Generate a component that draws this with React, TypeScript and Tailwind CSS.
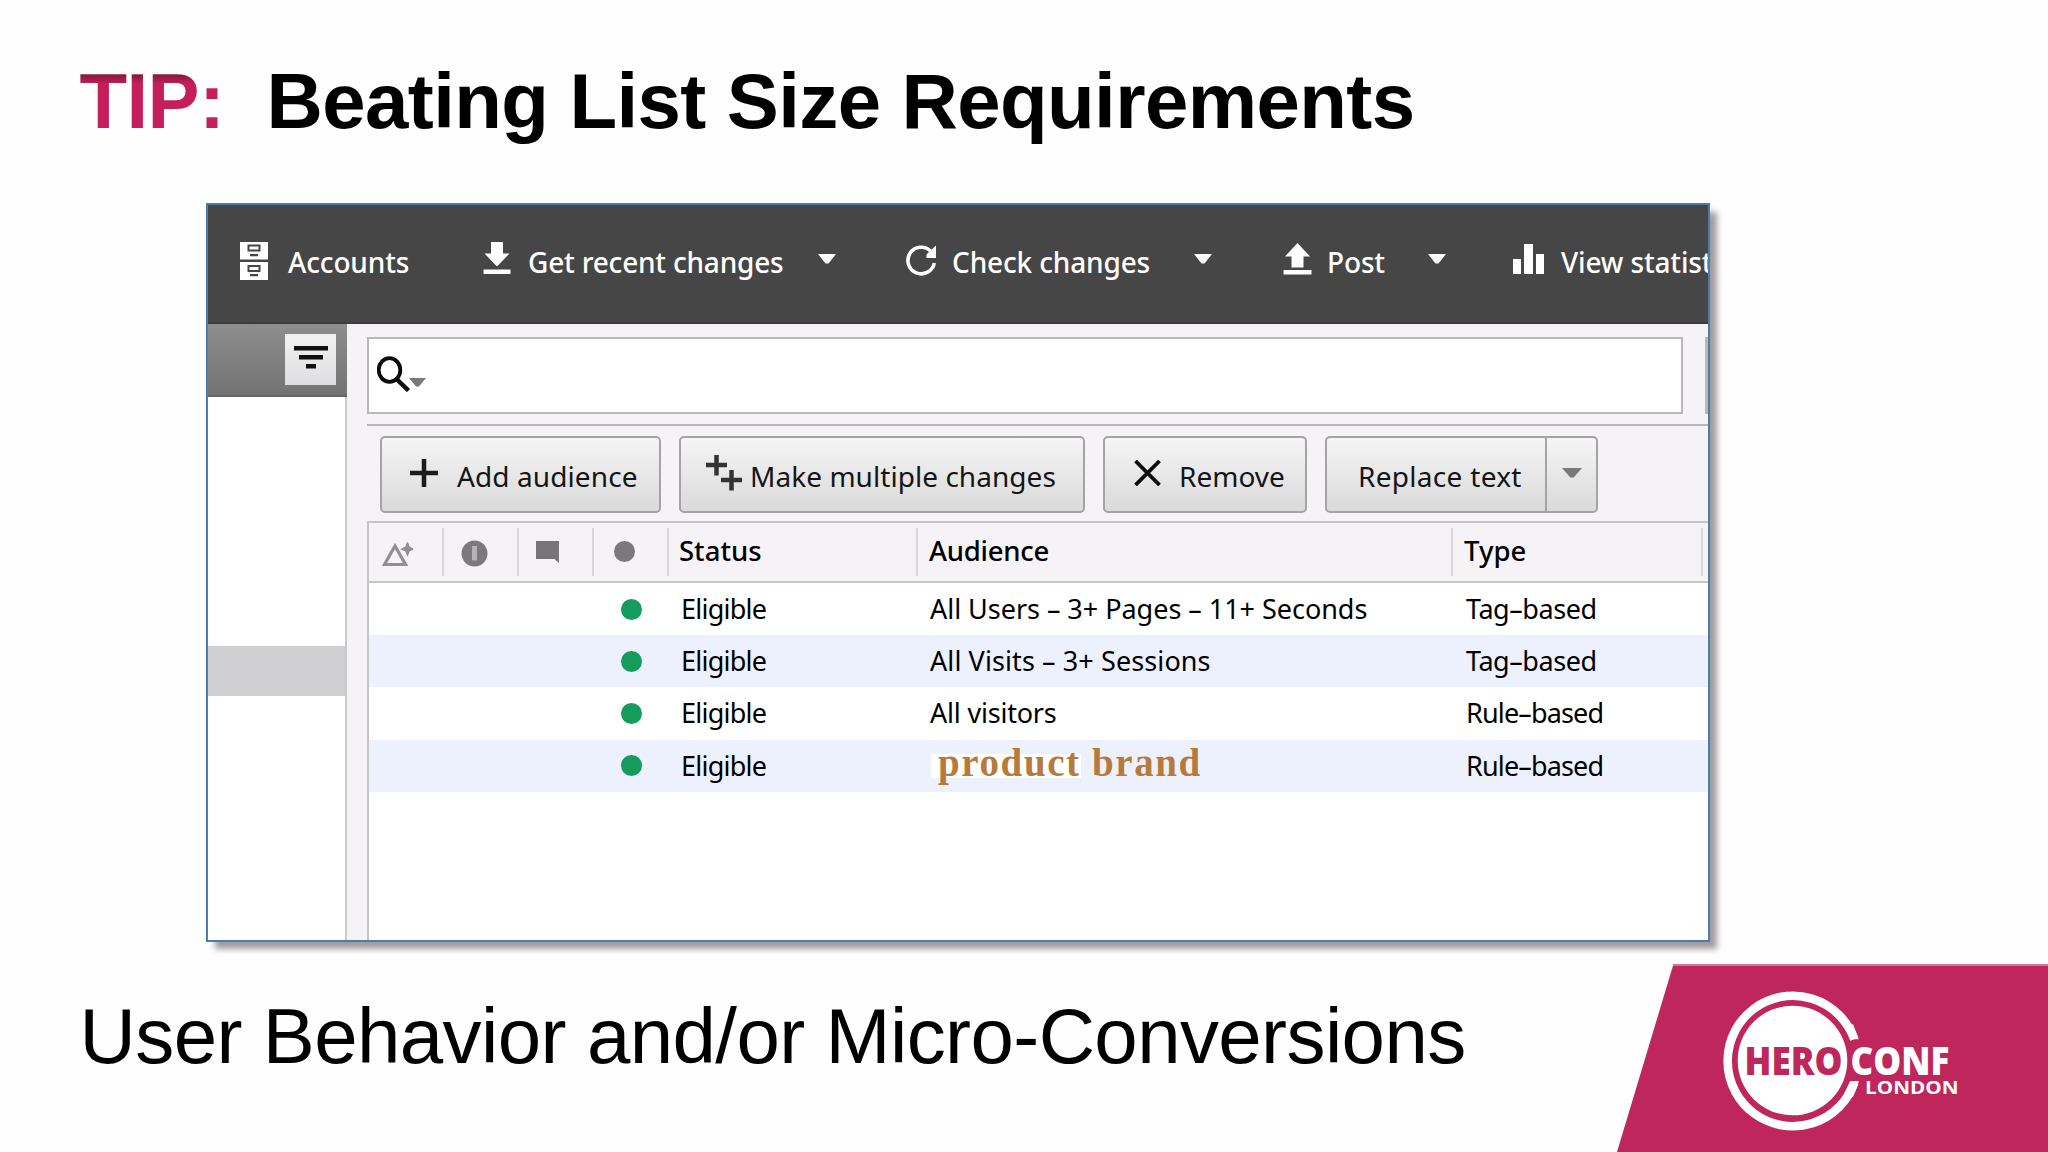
import React from "react";

const Caret = ({ className, w = 18, h = 10 }: { className: string; w?: number; h?: number }) => (
  <svg className={className} width={w} height={h} viewBox="0 0 18 10" preserveAspectRatio="none" fill="currentColor">
    <path d="M0 0H18L10.5 9.5H7.5Z" />
  </svg>
);

const CabinetIcon = () => (
  <svg width="28" height="38" viewBox="0 0 28 38">
    <path d="M0 0H28V17.5H0ZM0 20H28V38H0Z" fill="#fff" />
    <path d="M8.500 3.500H19.500V8.500H8.500ZM8.500 24H19.500V29H8.500Z" fill="none" stroke="#474647" strokeWidth="2" />
    <path d="M10 13.200H18M10 33.200H18" stroke="#474647" strokeWidth="2.200" />
  </svg>
);

const DownloadIcon = () => (
  <svg width="28" height="33" viewBox="0 0 28 33" fill="#fff">
    <path d="M8 0H20V11.500H26.500L14 24.500L1.500 11.500H8Z" />
    <path d="M0.500 27.500H27.500V32H0.500Z" />
  </svg>
);

const UploadIcon = () => (
  <svg width="29" height="32" viewBox="0 0 29 32" fill="#fff">
    <path d="M14.500 0L27 13.500H20.500V24.500H8.500V13.500H2Z" />
    <path d="M0.500 27H28.500V31.500H0.500Z" />
  </svg>
);

const RefreshIcon = () => (
  <svg width="32" height="32" viewBox="0 0 32 32">
    <path d="M25.500 7A13.300 13.300 0 1 0 29.300 19" fill="none" stroke="#fff" strokeWidth="3.600" />
    <path d="M31 1.500V14H21.500V10.500Z" fill="#fff" />
  </svg>
);

const BarsIcon = () => (
  <svg width="31" height="30" viewBox="0 0 31 30" fill="#fff">
    <path d="M0 15H8V30H0ZM11 0H20V30H11ZM23 10H31V30H23Z" />
  </svg>
);

function Toolbar() {
  return (
    <div className="flex h-[119px] shrink-0 items-start bg-[#474647] border-b-2 border-[#3d3c3d] pl-8 pt-[37px] text-[28px] leading-[40px] font-medium tracking-[-0.15px] text-white whitespace-nowrap *:shrink-0">
      <div className="flex w-[243px]">
        <span className="w-12"><CabinetIcon /></span>
        <span>Accounts</span>
      </div>
      <div className="flex w-[422px]">
        <span className="w-[45px]"><DownloadIcon /></span>
        <span className="w-[290px] tracking-[-0.2px]">Get recent changes</span>
        <Caret className="mt-3" />
      </div>
      <div className="flex w-[378px]">
        <span className="w-[47px] pt-[2px]"><RefreshIcon /></span>
        <span className="w-[242px]">Check changes</span>
        <Caret className="mt-3" />
      </div>
      <div className="flex w-[230px]">
        <span className="w-[44px] pt-[1px]"><UploadIcon /></span>
        <span className="w-[101px]">Post</span>
        <Caret className="mt-3" />
      </div>
      <div className="flex">
        <span className="w-12 pt-[2px]"><BarsIcon /></span>
        <span>View statistics</span>
      </div>
    </div>
  );
}

function Sidebar() {
  return (
    <div className="flex w-[139px] shrink-0 flex-col bg-white">
      <div className="flex h-[73px] justify-end border-b-2 border-[#666566] bg-linear-to-b from-[#8f8e8f] to-[#747374] pr-[11px] pt-[10px]">
        <div className="flex h-[51px] w-[51px] justify-center bg-linear-to-b from-[#f3f2f3] to-[#dedddf] pt-3">
          <svg width="34" height="24" viewBox="0 0 34 24" fill="#111">
            <path d="M0 0H34V4.500H0ZM5 9H29V13.500H5ZM12 18H22V22.500H12Z" />
          </svg>
        </div>
      </div>
      <div className="flex flex-1 flex-col border-r-2 border-[#cbc9cb]">
        <div className="mt-[249px] h-[50px] bg-[#d0cfd1]" />
      </div>
    </div>
  );
}

const btn =
  "flex h-[77px] items-center rounded-[5px] border-2 border-[#a5a3a5] bg-linear-to-b from-[#f6f5f6] to-[#dbdadb] text-[28px] leading-[44px] text-[#151515] whitespace-nowrap";

function Actions() {
  return (
    <div className="flex gap-[18px] border-t-2 border-[#b9b7b9] pl-[13px] pt-[10px] pb-[8px]">
      <div className={`${btn} w-[281px] pl-[28px]`}>
        <svg className="mr-[19px] -mt-1" width="28" height="28" viewBox="0 0 28 28"><path d="M14 0V28M0 14H28" stroke="#1c1c1c" strokeWidth="4.500" /></svg>
        <span className="pt-[2px] tracking-[0.1px]">Add audience</span>
      </div>
      <div className={`${btn} w-[406px] pl-[25px]`}>
        <svg className="mr-[8px] -mt-1" width="36" height="36" viewBox="0 0 36 36"><path d="M10.500 0V20.500M0 10H21M25.500 15V35.500M15 25H36" stroke="#333" strokeWidth="4.500" /></svg>
        <span className="pt-[2px] tracking-[0.050px]">Make multiple changes</span>
      </div>
      <div className={`${btn} w-[204px] pl-[29px]`}>
        <svg className="mr-[18px] -mt-1" width="27" height="26" viewBox="0 0 27 26"><path d="M1.500 1L25.500 25M25.500 1L1.500 25" stroke="#0c0c0c" strokeWidth="3.800" /></svg>
        <span className="pt-[2px]">Remove</span>
      </div>
      <div className={`${btn} w-[273px]`}>
        <span className="w-[218px] pl-[31px] pt-[2px] tracking-[0.300px]">Replace text</span>
        <div className="flex h-full flex-1 items-center justify-center border-l-2 border-[#a5a3a5] text-[#7a797a]">
          <Caret className="-mt-1" w={20} />
        </div>
      </div>
    </div>
  );
}

const cols = "grid grid-cols-[75px_75px_75px_75px_249px_535px_250px]";

const rows = [
  { audience: "All Users – 3+ Pages – 11+ Seconds", type: "Tag–based", fit: "tracking-[-0.030px]", typeFit: "tracking-[-0.450px]" },
  { audience: "All Visits – 3+ Sessions", type: "Tag–based", fit: "tracking-[0.100px]", typeFit: "tracking-[-0.450px]" },
  { audience: "All visitors", type: "Rule–based", fit: "tracking-[-0.200px]", typeFit: "tracking-[-0.850px]" },
  { audience: "product brand", type: "Rule–based", fit: "", typeFit: "tracking-[-0.850px]" },
];

function Table() {
  return (
    <div className="flex flex-1 flex-col border-l-2 border-t-2 border-[#c6c4c6] bg-white whitespace-nowrap text-black">
      <div className={`${cols} h-[60px] border-b-2 border-[#c6c4c6] bg-[#f5f3f6] py-[5px] text-[27.5px] leading-[45px] font-medium *:border-r-2 *:border-[#d8d6d9]`}>
        <div className="pl-[13px] pt-[14px]">
          <svg width="31" height="25" viewBox="0 0 31 25">
            <path d="M2.500 22.500L13 4L23.500 22.500Z" fill="none" stroke="#908f91" strokeWidth="3.200" />
            <path d="M25.500 1L27.200 5.300L31 7L27.200 8.700L25.500 13L23.800 8.700L20 7L23.800 5.300Z" fill="#908f91" stroke="#908f91" strokeWidth="1.500" />
          </svg>
        </div>
        <div className="pl-[17px] pt-3">
          <svg width="27" height="27" viewBox="0 0 27 27">
            <circle cx="13.500" cy="13.500" r="13" fill="#7b797b" />
            <path d="M11 6H16V20.500H11Z" fill="#b5b3b5" />
          </svg>
        </div>
        <div className="pl-[17px] pt-[13px]">
          <svg width="24" height="23" viewBox="0 0 24 23" fill="#767476"><path d="M0 0H23V22L18.500 18H0Z" /></svg>
        </div>
        <div className="pl-5 pt-[13px]"><div className="size-[21px] rounded-full bg-[#7b797b]" /></div>
        <div className="pl-[10px]">Status</div>
        <div className="pl-[11px] tracking-[-0.250px]">Audience</div>
        <div className="pl-[11px]">Type</div>
      </div>
      {rows.map((r, i) => (
        <div key={i} className={`${cols} h-[52.2px] items-center text-[27px] leading-[50px] ${i % 2 ? "bg-[#edf0fd]" : "bg-white"}`}>
          <div className="col-start-4 pl-[27px]"><div className="size-[21px] rounded-full bg-[#149c5d]" /></div>
          <div className="pl-[12px] tracking-[-0.750px]">Eligible</div>
          {i === 3 ? (
            <div className="pl-[13px]">
              <div className="h-[24px] w-[150px] bg-white pl-[7px] font-['Liberation_Serif',serif] text-[39px] leading-[17px] font-bold tracking-[1.600px] text-[#b67a3d]">
                {r.audience}
              </div>
            </div>
          ) : (
            <div className={`pl-[12px] ${r.fit}`}>{r.audience}</div>
          )}
          <div className={`pl-[13px] ${r.typeFit}`}>{r.type}</div>
        </div>
      ))}
    </div>
  );
}

function Logo() {
  return (
    <svg className="absolute bottom-0 right-0" width="431" height="188" viewBox="1617 964 431 188">
      <path d="M1673.500 964H2048V1152H1617Z" fill="#bf265b" />
      <path d="M1673 965H2048" stroke="#d27596" strokeWidth="2" />
      <path d="M1854.300 1039.200A65.200 65.200 0 1 0 1854.300 1082.800" fill="none" stroke="#fff" strokeWidth="8.600" />
      <path d="M1850.200 1039.200L1846 1030L1853 1024L1858.600 1039.200ZM1850.200 1081H1859L1853 1097L1844 1094Z" fill="#fff" />
      <circle cx="1792.500" cy="1060.500" r="54.800" fill="#fff" />
      <g fontFamily="'Open Sans', sans-serif" fontWeight="800">
        <text x="1744.500" y="1074.500" fontSize="39" textLength="98" lengthAdjust="spacingAndGlyphs" fill="#bf265b">HERO</text>
        <text x="1850.500" y="1074.500" fontSize="39" textLength="99" lengthAdjust="spacingAndGlyphs" fill="#fff">CONF</text>
        <text x="1865" y="1094" fontSize="17.500" fontWeight="700" textLength="93.500" lengthAdjust="spacingAndGlyphs" fill="#fff">LONDON</text>
      </g>
    </svg>
  );
}

export default function App() {
  return (
    <div className="relative flex h-[1152px] w-[2048px] flex-col overflow-hidden bg-[#fefefe] font-['Noto_Sans',sans-serif]">
      <h1 className="flex pl-[79.5px] pt-[58px] font-['Liberation_Sans',sans-serif] text-[78px] leading-[86px] font-bold tracking-[-0.6px] text-black">
        <span className="w-[187px] bg-[linear-gradient(to_bottom,#7d1738_18%,#c51f5b_30%,#c51f5b)] bg-clip-text text-transparent">TIP:</span>
        <span className="whitespace-nowrap">Beating List Size Requirements</span>
      </h1>
      <div className="ml-[206px] mt-[59px] flex h-[739px] w-[1504px] flex-col overflow-hidden border-2 border-[#4a7dae] bg-[#f5f3f6] shadow-[8px_8px_6px_-1px_rgba(70,60,60,0.5)]">
        <Toolbar />
        <div className="flex flex-1">
          <Sidebar />
          <div className="ml-5 flex flex-1 flex-col">
            <div className="flex h-[100px] gap-[22px] pt-[13px]">
              <div className="h-[77px] w-[1316px] shrink-0 border-2 border-[#b9b7b9] bg-white">
                <div className="flex pl-2 pt-[17px]">
                  <svg width="35" height="36" viewBox="0 0 35 36">
                    <ellipse cx="12.500" cy="14" rx="10.800" ry="11.800" fill="none" stroke="#0c0c0c" strokeWidth="3.800" />
                    <path d="M19.500 23L31.500 34.500" stroke="#0c0c0c" strokeWidth="4.500" />
                  </svg>
                  <Caret className="-ml-[3px] mt-[22px] text-[#7a797a]" w={17} h={9} />
                </div>
              </div>
              <div className="h-[77px] w-[3px] shrink-0 bg-[#b9b7b9]" />
            </div>
            <Actions />
            <Table />
          </div>
        </div>
      </div>
      <p className="pl-[79.5px] pt-[51px] font-['Liberation_Sans',sans-serif] text-[78px] leading-[86px] tracking-[-0.6px] text-black whitespace-nowrap">
        User Behavior and/or Micro-Conversions
      </p>
      <Logo />
    </div>
  );
}
